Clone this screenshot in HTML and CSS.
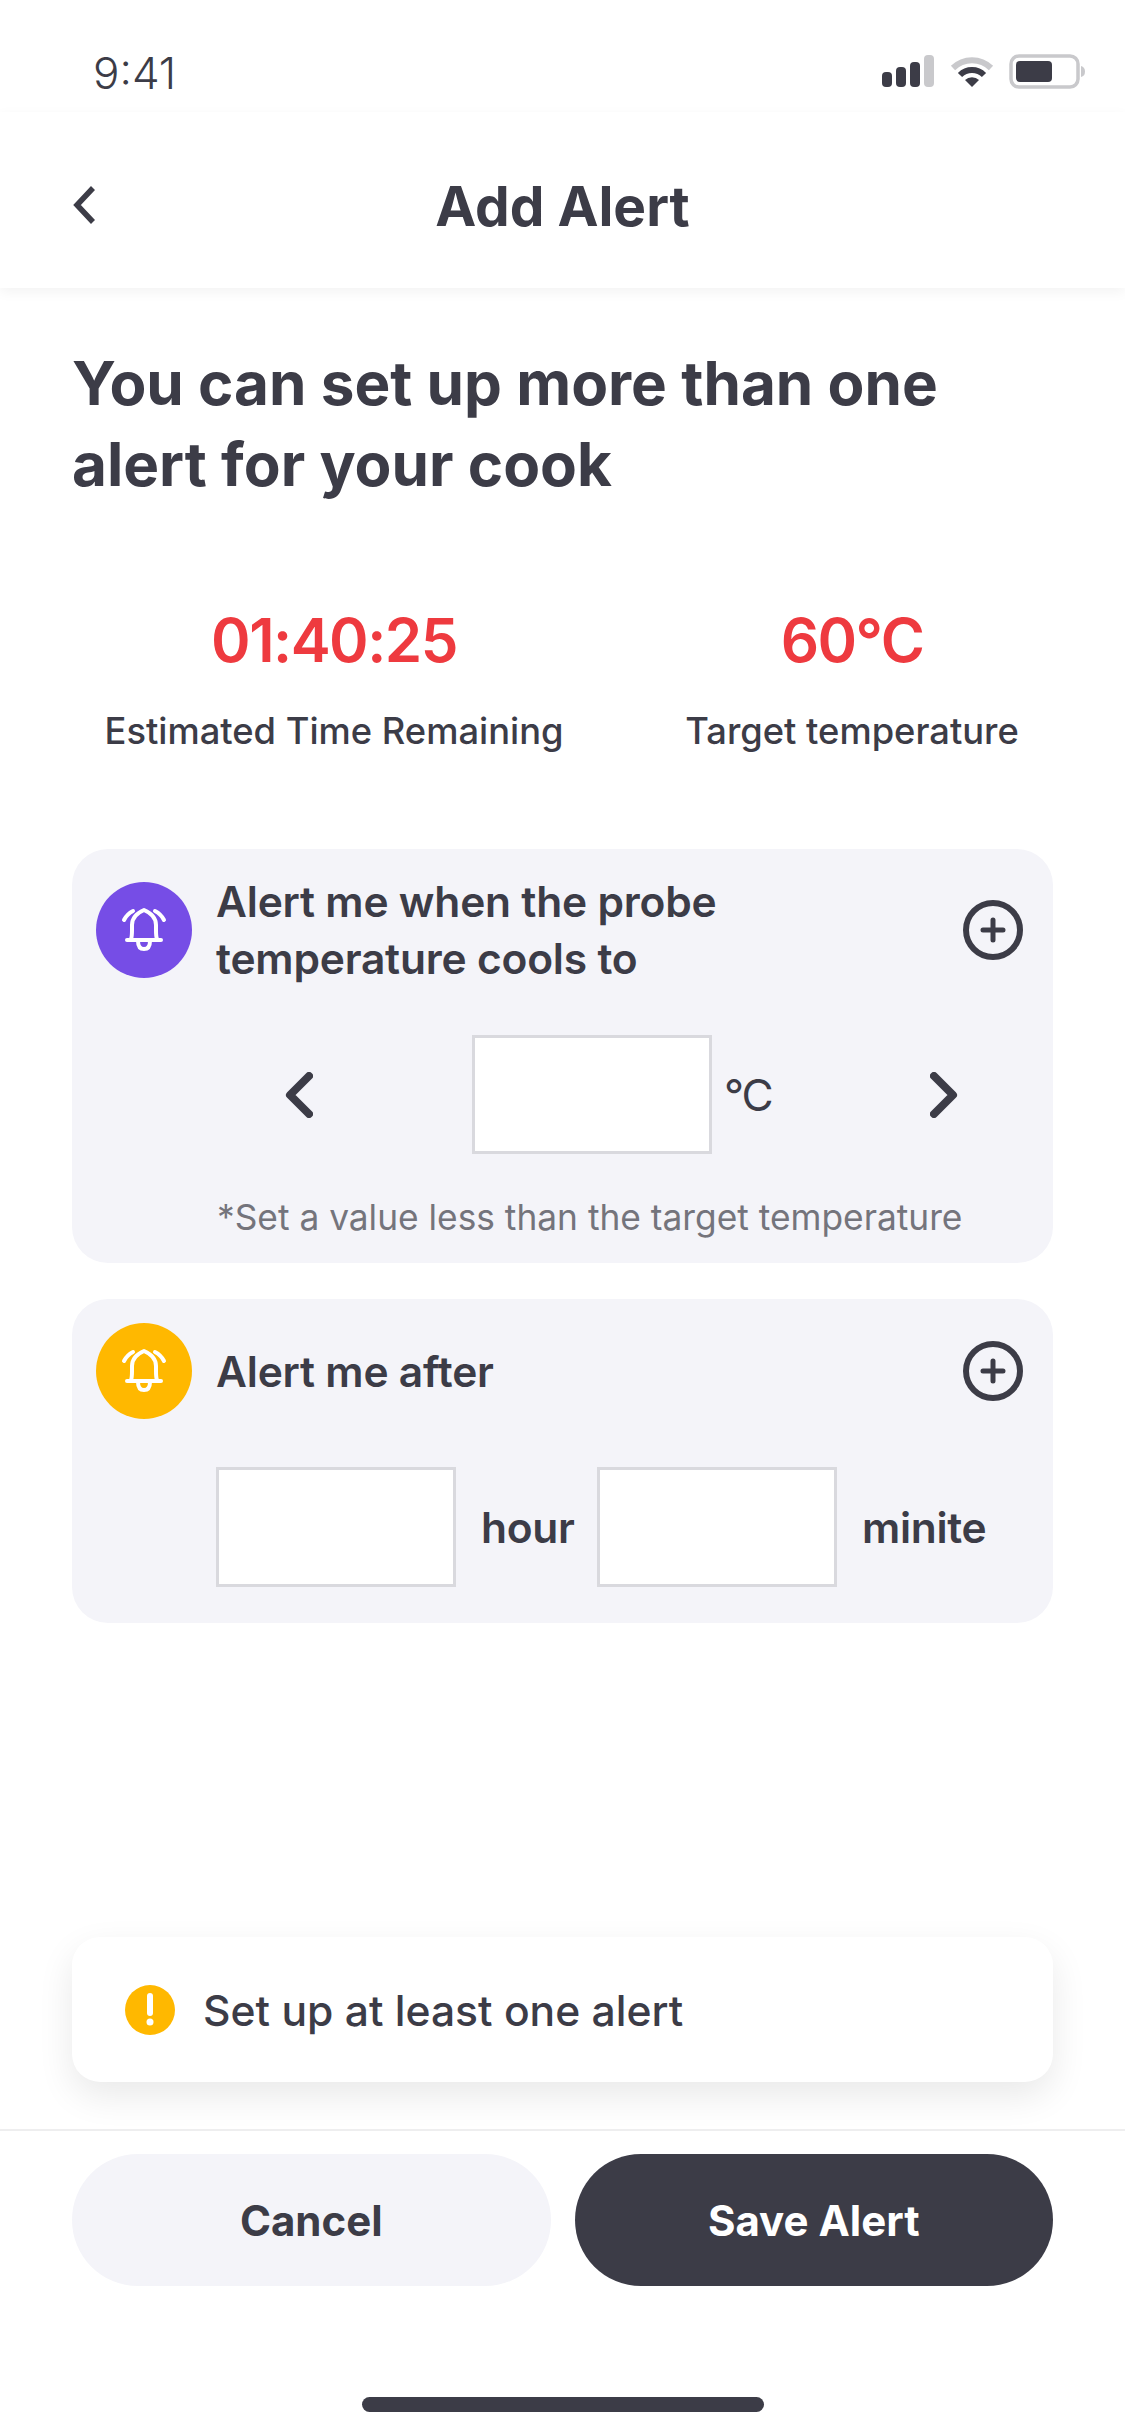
FILE: index.html
```html
<!DOCTYPE html>
<html lang="en">
<head>
<meta charset="utf-8">
<title>Add Alert</title>
<link rel="stylesheet" href="styles.css">
</head>
<body>
<div class="screen">
  <div class="status">
    <span class="time">9:41</span>
    <svg class="status-icons" width="200" height="34" viewBox="0 0 200 34">
      <rect x="0" y="17" width="10" height="15" rx="4" fill="#3c3c47"/>
      <rect x="14" y="12" width="10" height="20" rx="4" fill="#3c3c47"/>
      <rect x="28" y="7" width="10" height="25" rx="4" fill="#3c3c47"/>
      <rect x="42" y="0" width="10" height="32" rx="4" fill="#c9c9cc"/>
      <path d="M71 13a27 27 0 0 1 38 0" fill="none" stroke="#c9c9cc" stroke-width="6"/>
      <path d="M78 20a17 17 0 0 1 24 0" fill="none" stroke="#3c3c47" stroke-width="6"/>
      <path d="M83 25a10 10 0 0 1 14 0l-7 7z" fill="#3c3c47"/>
      <rect x="129" y="1" width="67" height="31" rx="8" fill="none" stroke="#c9c9cc" stroke-width="3.5"/>
      <rect x="134" y="6" width="36" height="21" rx="4" fill="#3c3c47"/>
      <path d="M199 11q4 1 4 5.500t-4 5.500z" fill="#c9c9cc"/>
    </svg>
  </div>
  <header class="nav">
    <svg class="back" width="22" height="38" viewBox="0 0 22 38"><path d="M20 2 4 19l16 17" fill="none" stroke="#3c3c47" stroke-width="5.500"/></svg>
    <h1 class="nav-title">Add Alert</h1>
  </header>
  <main class="content">
    <h2 class="lead">You can set up more than one alert for your cook</h2>
    <section class="stats">
      <div class="stat stat-time"><div class="stat-value">01:40:25</div><div class="stat-label">Estimated Time Remaining</div></div>
      <div class="stat stat-temp"><div class="stat-value">60°C</div><div class="stat-label">Target temperature</div></div>
    </section>
    <section class="card card-temp">
      <div class="card-head">
        <span class="badge badge-purple"><svg width="62" height="62" viewBox="0 0 62 62"><g fill="none" stroke="#fff" stroke-width="4" stroke-linecap="round" stroke-linejoin="round"><path d="M14 41h34"/><path d="M18 40c1-2 1-5 1-9v-5c0-7 5-12 12-15 7 3 12 8 12 15v5c0 4 0 7 1 9"/><path d="M25 42c0 5 2 8 6 8s6-3 6-8"/><path d="M11 21c2-4 5-7 9-9"/><path d="M51 21c-2-4-5-7-9-9"/></g></svg></span>
        <div class="card-title">Alert me when the probe temperature cools to</div>
        <svg class="plus" width="60" height="60" viewBox="0 0 60 60"><circle cx="30" cy="30" r="27" fill="none" stroke="#3c3c47" stroke-width="6"/><path d="M30 20v20M20 30h20" stroke="#3c3c47" stroke-width="5" stroke-linecap="round"/></svg>
      </div>
      <div class="temp-row">
        <svg class="chev" width="28" height="46" viewBox="0 0 28 46"><path d="M24 4 5 23l19 19" fill="none" stroke="#3c3c47" stroke-width="8" stroke-linecap="round" stroke-linejoin="round"/></svg>
        <span class="field field-temp"></span>
        <span class="unit">°C</span>
        <svg class="chev chev-next" width="28" height="46" viewBox="0 0 28 46"><path d="M4 4l19 19L4 42" fill="none" stroke="#3c3c47" stroke-width="8" stroke-linecap="round" stroke-linejoin="round"/></svg>
      </div>
      <p class="hint">*Set a value less than the target temperature</p>
    </section>
    <section class="card card-time">
      <div class="card-head">
        <span class="badge badge-amber"><svg width="62" height="62" viewBox="0 0 62 62"><g fill="none" stroke="#fff" stroke-width="4" stroke-linecap="round" stroke-linejoin="round"><path d="M14 41h34"/><path d="M18 40c1-2 1-5 1-9v-5c0-7 5-12 12-15 7 3 12 8 12 15v5c0 4 0 7 1 9"/><path d="M25 42c0 5 2 8 6 8s6-3 6-8"/><path d="M11 21c2-4 5-7 9-9"/><path d="M51 21c-2-4-5-7-9-9"/></g></svg></span>
        <div class="card-title">Alert me after</div>
        <svg class="plus" width="60" height="60" viewBox="0 0 60 60"><circle cx="30" cy="30" r="27" fill="none" stroke="#3c3c47" stroke-width="6"/><path d="M30 20v20M20 30h20" stroke="#3c3c47" stroke-width="5" stroke-linecap="round"/></svg>
      </div>
      <div class="time-row">
        <span class="field"></span>
        <span class="time-unit unit-hour">hour</span>
        <span class="field"></span>
        <span class="time-unit">minite</span>
      </div>
    </section>
    <div class="toast">
      <svg width="50" height="50" viewBox="0 0 50 50"><circle cx="25" cy="25" r="25" fill="#ffb800"/><path d="M25 11v17" stroke="#fff" stroke-width="6" stroke-linecap="round"/><circle cx="25" cy="37" r="3.500" fill="#fff"/></svg>
      <span class="toast-text">Set up at least one alert</span>
    </div>
  </main>
  <footer class="actions">
    <button class="btn btn-cancel">Cancel</button>
    <button class="btn btn-save">Save Alert</button>
  </footer>
  <div class="home-bar"><span class="home-pill"></span></div>
</div>
</body>
</html>
```
FILE: styles.css
```css
* { box-sizing: border-box; }
html, body { margin: 0; padding: 0; background: #fff; }
body { font-family: "Inter", "Liberation Sans", sans-serif; color: #3c3c47; }
.screen { width: 1125px; height: 2436px; display: flex; flex-direction: column; overflow: hidden; }
.status { height: 112px; flex: none; display: flex; justify-content: space-between; padding: 55px 29px 0 93px; }
.time { font-size: 44px; line-height: 36px; font-weight: 300; }
.status-icons { overflow: visible; margin-right: 14px; }
.nav { height: 176px; flex: none; display: flex; align-items: center; justify-content: center; position: relative; padding-top: 11px; box-shadow: 0 4px 12px rgba(0,0,0,.05); }
.back { position: absolute; left: 73px; top: 74px; }
.nav-title { margin: 0; font-size: 55px; line-height: 60px; font-weight: 700; }
.content { flex: 1; display: flex; flex-direction: column; padding: 0 72px; min-height: 0; }
.lead { margin: 55px 0 0; font-size: 60.200px; line-height: 81px; font-weight: 700; width: 940px; }
.stats { display: flex; margin-top: 100px; height: 150px; }
.stat { text-align: center; flex: none; }
.stat-time { width: 524px; }
.stat-temp { width: 512px; }
.stat-value { font-size: 60px; line-height: 70px; font-weight: 600; letter-spacing: -1.500px; color: #ee3a3f; }
.stat-label { font-size: 36.300px; line-height: 44px; font-weight: 500; margin-top: 34px; white-space: nowrap; }
.card { background: #f4f4f9; border-radius: 36px; padding: 33px 24px 0; }
.card-temp { height: 414px; margin-top: 94px; }
.card-time { height: 324px; margin-top: 36px; padding-top: 24px; }
.card-head { display: flex; align-items: center; height: 96px; }
.badge { width: 96px; height: 96px; border-radius: 50%; display: flex; align-items: center; justify-content: center; flex: none; }
.badge-purple { background: #764de6; }
.badge-amber { background: #ffb800; }
.card-title { font-size: 42.500px; line-height: 57px; font-weight: 600; letter-spacing: -.2px; margin-left: 24px; width: 640px; flex: none; }
.plus { margin-left: auto; margin-right: 6px; flex: none; }
.temp-row { display: flex; align-items: center; margin-top: 57px; padding-left: 189px; height: 119px; }
.field { width: 240px; height: 120px; background: #fff; border: 3px solid #d9d9de; flex: none; display: block; }
.field-temp { height: 119px; margin-left: 159px; }
.unit { font-size: 44px; font-weight: 400; letter-spacing: -2px; margin-left: 12px; }
.chev-next { margin-left: auto; margin-right: 71px; }
.hint { margin: 42px 0 0 121px; font-size: 35.300px; line-height: 44px; color: #74747c; white-space: nowrap; }
.time-row { display: flex; align-items: center; margin-top: 48px; padding-left: 120px; }
.time-unit { font-size: 42.500px; font-weight: 600; letter-spacing: -.3px; margin-left: 25px; }
.unit-hour { width: 116px; }
.toast { margin-top: auto; margin-bottom: 47px; height: 145px; background: #fff; border-radius: 28px; box-shadow: 0 14px 36px rgba(0,0,0,.09); display: flex; align-items: center; padding-left: 53px; gap: 28px; flex: none; }
.toast-text { font-size: 42.600px; font-weight: 500; position: relative; top: 1px; }
.actions { flex: none; height: 157px; border-top: 2px solid #eeeeef; padding: 23px 72px 0; display: flex; gap: 24px; align-items: flex-start; }
.btn { flex: 1; height: 132px; border: 0; border-radius: 66px; font-family: inherit; font-size: 42px; font-weight: 700; }
.btn-cancel { background: #f4f4f9; color: #3c3c47; }
.btn-save { background: #3c3c47; color: #fff; }
.home-bar { flex: none; height: 150px; display: flex; justify-content: center; padding-top: 111px; }
.home-pill { width: 402px; height: 15px; background: #3c3c47; border-radius: 8px; display: block; }
```
